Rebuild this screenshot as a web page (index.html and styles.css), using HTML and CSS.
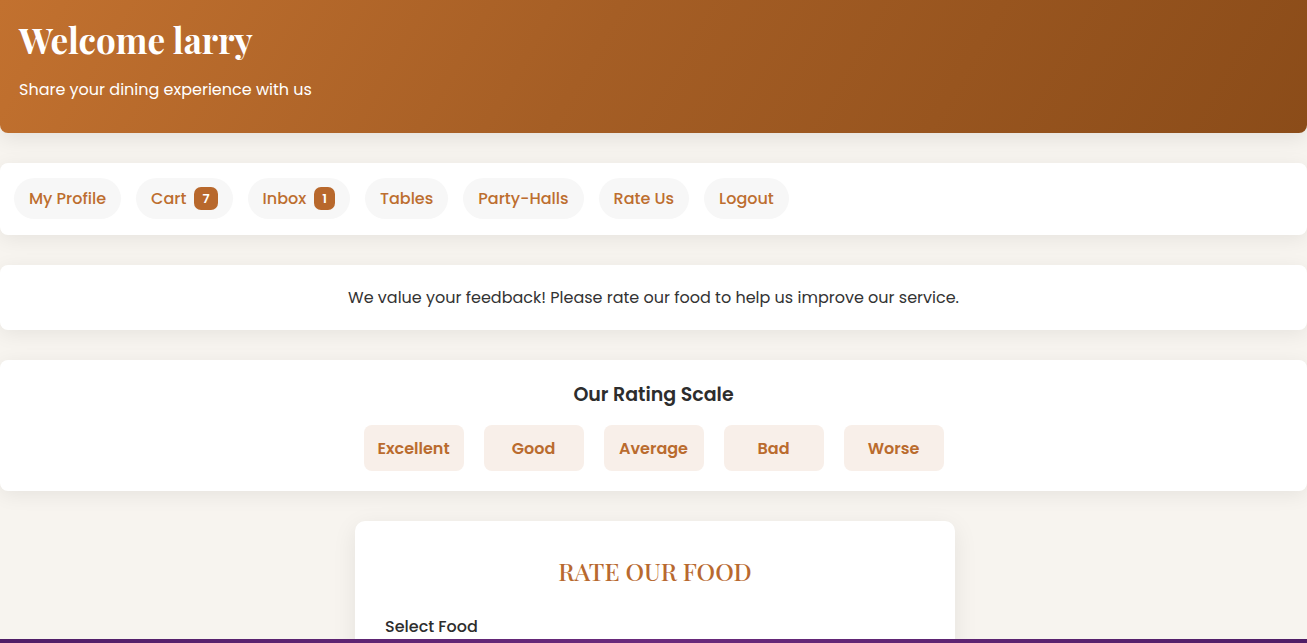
FILE: index.html
```html
<!DOCTYPE html>
<html lang="en">
<head>
<meta charset="utf-8">
<title>Rate Our Food</title>
<link rel="stylesheet" href="styles.css">
</head>
<body>
<div class="page">
  <header class="hero">
    <h1 class="hero-title">Welcome larry</h1>
    <p class="hero-sub">Share your dining experience with us</p>
  </header>

  <nav class="card nav">
    <a class="pill">My Profile</a>
    <a class="pill">Cart <span class="badge">7</span></a>
    <a class="pill">Inbox <span class="badge">1</span></a>
    <a class="pill">Tables</a>
    <a class="pill">Party-Halls</a>
    <a class="pill">Rate Us</a>
    <a class="pill">Logout</a>
  </nav>

  <section class="card notice">
    We value your feedback! Please rate our food to help us improve our service.
  </section>

  <section class="card scale">
    <h2 class="scale-title">Our Rating Scale</h2>
    <div class="scale-items">
      <span class="scale-item">Excellent</span>
      <span class="scale-item">Good</span>
      <span class="scale-item">Average</span>
      <span class="scale-item">Bad</span>
      <span class="scale-item">Worse</span>
    </div>
  </section>

  <section class="form-card">
    <h2 class="form-title">RATE OUR FOOD</h2>
    <label class="form-label">Select Food</label>
  </section>
</div>
<div class="bottom-bar"></div>
</body>
</html>
```

FILE: styles.css
```css
* { box-sizing: border-box; }

html, body {
  margin: 0;
  padding: 0;
}

body {
  background: #f7f4ef;
  font-family: "Poppins", "Open Sans", "Liberation Sans", sans-serif;
  color: #2f2f2f;
  overflow: hidden;
}

.page {
  display: flex;
  flex-direction: column;
  gap: 30px;
  padding-bottom: 40px;
}

.hero {
  background: linear-gradient(120deg, #c2712f 0%, #a55e25 45%, #8b4c19 100%);
  color: #fff;
  padding: 18px 19px 31px;
  border-radius: 0 0 8px 8px;
  box-shadow: 0 6px 20px rgba(0, 0, 0, 0.08);
  height: 133px;
}

.hero-title {
  margin: 0;
  font-family: "Playfair Display", "Liberation Serif", serif;
  font-weight: 700;
  font-size: 35px;
  line-height: 44px;
}

.hero-sub {
  margin: 17px 0 0;
  font-size: 16px;
  line-height: 22px;
}

.card {
  background: #fff;
  border-radius: 8px;
  box-shadow: 0 4px 20px rgba(0, 0, 0, 0.07);
}

.nav {
  display: flex;
  align-items: center;
  gap: 15px;
  padding: 0 14px 1px;
  height: 72px;
}

.pill {
  display: flex;
  align-items: center;
  gap: 8px;
  height: 41px;
  padding: 0 15px;
  border-radius: 21px;
  background: #f7f7f7;
  color: #bd6e2f;
  font-size: 16px;
  font-weight: 500;
  white-space: nowrap;
}

.badge {
  display: inline-flex;
  align-items: center;
  justify-content: center;
  height: 23px;
  padding: 0 8px;
  border-radius: 7px;
  background: #b8682c;
  color: #fff;
  font-size: 13px;
  font-weight: 600;
}

.notice {
  height: 65px;
  display: flex;
  align-items: center;
  justify-content: center;
  font-size: 16px;
  color: #333;
}

.scale {
  padding: 19px 20px 20px;
  height: 131px;
  text-align: center;
}

.scale-title {
  margin: 2px 0 17px;
  font-size: 19px;
  line-height: 27px;
  font-weight: 600;
  color: #2d2d2d;
}

.scale-items {
  display: flex;
  justify-content: center;
  gap: 20px;
}

.scale-item {
  width: 100px;
  height: 46px;
  display: flex;
  align-items: center;
  justify-content: center;
  border-radius: 8px;
  background: #f8efe9;
  color: #ba6b2e;
  font-weight: 600;
  font-size: 16px;
}

.form-card {
  width: 600px;
  align-self: center;
  margin-left: 3px;
  background: #fff;
  border-radius: 10px;
  box-shadow: 0 6px 24px rgba(0, 0, 0, 0.08);
  padding: 35px 30px 30px;
  min-height: 200px;
}

.form-title {
  margin: 0 0 30px;
  text-align: center;
  font-family: "Playfair Display", "Liberation Serif", serif;
  font-weight: 500;
  font-size: 24.5px;
  line-height: 30px;
  color: #b8692f;
}

.form-label {
  display: block;
  font-size: 16px;
  font-weight: 500;
  line-height: 22px;
  color: #2d2d2d;
}

.bottom-bar {
  position: fixed;
  left: 0;
  right: 0;
  bottom: 0;
  height: 4px;
  background: linear-gradient(90deg, #4f1d66, #6a2a7c 50%, #4f1d66);
}
```
